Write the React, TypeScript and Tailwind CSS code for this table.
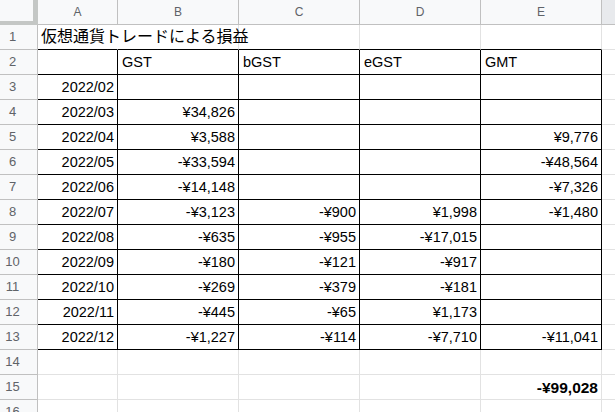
import React from "react";

type Row = { a?: string; b?: string; c?: string; d?: string; e?: string; bold?: boolean };

const rows: Row[] = [
  {},
  { b: "GST", c: "bGST", d: "eGST", e: "GMT" },
  { a: "2022/02" },
  { a: "2022/03", b: "¥34,826" },
  { a: "2022/04", b: "¥3,588", e: "¥9,776" },
  { a: "2022/05", b: "-¥33,594", e: "-¥48,564" },
  { a: "2022/06", b: "-¥14,148", e: "-¥7,326" },
  { a: "2022/07", b: "-¥3,123", c: "-¥900", d: "¥1,998", e: "-¥1,480" },
  { a: "2022/08", b: "-¥635", c: "-¥955", d: "-¥17,015" },
  { a: "2022/09", b: "-¥180", c: "-¥121", d: "-¥917" },
  { a: "2022/10", b: "-¥269", c: "-¥379", d: "-¥181" },
  { a: "2022/11", b: "-¥445", c: "-¥65", d: "¥1,173" },
  { a: "2022/12", b: "-¥1,227", c: "-¥114", d: "-¥7,710", e: "-¥11,041" },
  {},
  { e: "-¥99,028", bold: true },
  {},
];

const cols = ["A", "B", "C", "D", "E"] as const;

function Cell({ r, c, text, bold }: { r: number; c: number; text?: string; bold?: boolean }) {
  const inTable = r >= 2 && r <= 13 && c <= 4;
  const blackBottom = r >= 1 && r <= 13 && c <= 4;
  const header = r === 2;
  return (
    <div
      className={
        "h-[25px] border-r border-b flex items-end pb-[3px] whitespace-nowrap leading-[17px] " +
        (inTable ? "border-r-black " : "border-r-[#e2e2e2] ") +
        (blackBottom ? "border-b-black " : "border-b-[#e2e2e2] ") +
        (header ? "justify-start pl-[4px] " : "justify-end pr-[3px] ") +
        (bold ? "font-bold text-[15.5px] " : "")
      }
    >
      {text}
    </div>
  );
}

export default function App() {
  return (
    <div
      className="w-[615px] h-[412px] overflow-hidden bg-white text-[14.5px] text-black"
      style={{ fontFamily: '"Liberation Sans", Arial, "Noto Sans CJK JP", sans-serif' }}
    >
      <div className="grid grid-cols-[38px_80px_121px_121px_121px_121px_1fr]">
        {/* corner */}
        <div className="h-[25px] bg-[#f8f9fa] border-r-[5px] border-b-[4px] border-[#c4c7c5]" />
        {cols.map((l) => (
          <div
            key={l}
            className="h-[25px] bg-[#f8f9fa] border-r border-b border-[#c0c0c0] flex items-center justify-center text-[12px] text-[#5f6368]"
          >
            {l}
          </div>
        ))}
        <div className="h-[25px] bg-[#e8eaed] border-b border-[#c0c0c0]" />

        {rows.map((row, i) => {
          const r = i + 1;
          return (
            <React.Fragment key={r}>
              <div className="h-[25px] bg-[#f8f9fa] border-r border-b border-r-[#c0c0c0] border-b-[#c0c0c0] flex items-center text-[13px] text-[#5f6368]">
                <span className="w-[25px] text-center">{r}</span>
              </div>
              {r === 1 ? (
                <>
                  <div className="h-[25px] border-b border-b-black border-r border-r-transparent flex items-end pb-[2px] pl-[3px] whitespace-nowrap overflow-visible relative z-10 text-[16px] leading-[20px]">
                    仮想通貨トレードによる損益
                  </div>
                  <Cell r={r} c={1} />
                  <Cell r={r} c={2} />
                  <Cell r={r} c={3} />
                  <Cell r={r} c={4} />
                </>
              ) : (
                <>
                  <Cell r={r} c={0} text={row.a} />
                  <Cell r={r} c={1} text={row.b} />
                  <Cell r={r} c={2} text={row.c} />
                  <Cell r={r} c={3} text={row.d} />
                  <Cell r={r} c={4} text={row.e} bold={row.bold} />
                </>
              )}
              <div className="h-[25px] border-b border-[#e2e2e2]" />
            </React.Fragment>
          );
        })}
      </div>
    </div>
  );
}
